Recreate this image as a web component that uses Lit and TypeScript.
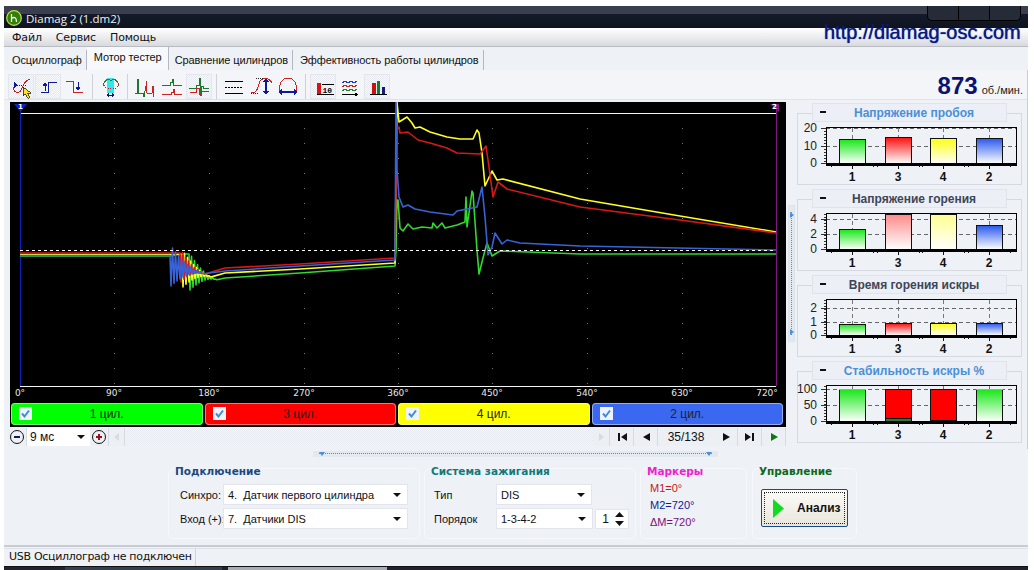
import { LitElement, html, css, svg } from 'lit';
import { customElement, property } from 'lit/decorators.js';

type Pt = [number, number];

const toPoints = (pts: Pt[]) => pts.map((p) => `${p[0]},${p[1]}`).join(' ');

// damped ringing after the ignition pulse, drawn as a step line
function ring(x0: number, x1: number, y: number, amp: number, period: number): Pt[] {
  const out: Pt[] = [];
  for (let x = x0; x <= x1; x += period / 2) {
    const k = (x - x0) / (x1 - x0);
    const sign = Math.round((x - x0) / (period / 2)) % 2 ? -1 : 1;
    out.push([x, y + (k * 8) + sign * amp * Math.pow(1 - k, 2)]);
  }
  return out;
}

const WAVES: { color: string; pts: Pt[] }[] = [
  {
    color: '#30d830',
    pts: [[20, 256], [172, 256], [178, 254], [189, 254], ...ring(190, 218, 272, 18, 3),
      [225, 278], [300, 273], [395, 266], [396, 250], [397, 200], [398, 200], [400, 228], [403, 231], [408, 224], [413, 229], [422, 227], [432, 228], [433, 223], [437, 228], [442, 223], [445, 228], [457, 225], [465, 222], [466, 197], [467, 227], [469, 213], [472, 191], [473, 193], [477, 250], [479, 274], [483, 258], [487, 243], [492, 256], [500, 251], [580, 254], [776, 254]],
  },
  {
    color: '#ffff20',
    pts: [[20, 254.5], [182, 254.5], ...ring(183, 212, 269, 18, 3),
      [225, 273], [300, 269], [395, 263], [397, 102], [399, 122], [407, 117], [412, 123], [415, 128], [420, 127], [430, 132], [447, 137], [460, 139], [473, 139], [477, 130], [479, 133], [482, 153], [485, 186], [492, 171], [497, 180], [503, 179], [580, 199], [680, 216], [776, 232]],
  },
  {
    color: '#d81818',
    pts: [[20, 253], [180, 253], ...ring(181, 205, 266, 16, 3),
      [225, 268], [300, 264], [395, 258], [397, 127], [399, 127], [400, 133], [408, 132], [418, 140], [430, 143], [447, 148], [457, 153], [480, 154], [486, 146], [489, 167], [493, 197], [498, 182], [507, 189], [580, 207], [680, 220], [776, 233]],
  },
  {
    color: '#3a62d8',
    pts: [[20, 255.5], [170, 255.5], ...ring(171, 205, 266, 20, 3),
      [225, 271], [300, 266], [395, 260], [396, 102], [397, 170], [399, 197], [403, 207], [408, 205], [415, 209], [430, 212], [453, 215], [457, 211], [477, 207], [482, 187], [485, 217], [488, 255], [492, 247], [495, 233], [502, 244], [507, 240], [520, 243], [580, 246], [776, 250]],
  },
];

const DEGREES = [
  [20, '0°'], [114, '90°'], [209, '180°'], [304, '270°'], [398, '360°'],
  [492, '450°'], [587, '540°'], [682, '630°'], [767, '720°'],
] as const;

// toolbar pictures, 26x26 with the button's own origin
const ICONS: Record<string, unknown> = {
  cursor: svg`<path d="M6 8v6l3-3z" fill="#0a1a9a"/><path d="M9 11h10" stroke="#0a1a9a" stroke-dasharray="1 1"/>
    <path d="M5 13c1 7 7 7 9 1s5-8 8-9" stroke="#c02020" fill="none"/>
    <path d="M15 13v9l2.500-2 2 4 2-1-2-4H23z" fill="#ffe020" stroke="#222" stroke-width=".8"/>`,
  up: svg`<path d="M6 18.500h7V8h9" stroke="#0a1a9a" fill="none"/><path d="M10 17V11" stroke="#0a1a9a"/><path d="M7.500 12h5L10 8z" fill="#0a1a9a"/>`,
  down: svg`<path d="M4 7.500h7V18h10" stroke="#d02020" fill="none"/><path d="M16 8v6" stroke="#0a1a9a"/><path d="M13.500 13h5L16 17z" fill="#0a1a9a"/>`,
  scan: svg`<rect x="10" y="4" width="7" height="15" fill="#30e8f0"/>
    <path d="M6 12c1-6 5-8 8-5 3-3 7-1 8 5" stroke="#208040" fill="none"/>
    <path d="M6 9c2 6 5 6 8 6s6 0 8-6" stroke="#c02020" stroke-dasharray="1 1.500" fill="none"/>
    <path d="M10 21h7" stroke="#0a1a6a"/><path d="M9 21l3-2v4zM18 21l-3-2v4z" fill="#0a1a6a"/>`,
  pulses: svg`<path d="M3 19h2V5h1v14h5l1 4 2-11" stroke="#1a7a2a" fill="none"/><path d="M14 19V7l1 12h5l1-7 1 11" stroke="#d02020" fill="none"/>`,
  stack: svg`<path d="M3 11.500h8V8h2V5h1v6h2v.5h7" stroke="#1a7a2a" fill="none"/><path d="M3 20.500h9V18h2v-3h1v5h2v.5h6" stroke="#d02020" fill="none"/>`,
  stackOn: svg`<path d="M3 14.500h7V11h3V4h1v17h1v-9h2v2.500h6" stroke="#1a7a2a" fill="none"/><path d="M4 18.500h6V14h3v6h2v-2.500h8" stroke="#d02020" fill="none"/>`,
  lines: svg`<path d="M4 7.500h18M4 19.500h18" stroke="#000"/><path d="M4 13.500h18" stroke="#000" stroke-dasharray="2 1"/>`,
  rise: svg`<path d="M8 4.500h10M3 19.500h8" stroke="#222" stroke-dasharray="1 1"/><path d="M3 19c5 0 6-2 8-9 1-6 9-8 13-1" stroke="#d02020" fill="none"/>
    <path d="M18 7v11" stroke="#0a1a9a" stroke-width="1.500"/><path d="M15 8h6l-3-4zM15 17h6l-3 4z" fill="#0a1a9a"/>`,
  dome: svg`<path d="M5 18C3 9 8 4 13 4s10 5 8 14" stroke="#d02020" fill="none"/>
    <path d="M6 18h14" stroke="#0a1a9a" stroke-width="1.500"/><path d="M7 15v6l-4-3zM19 15v6l4-3z" fill="#0a1a9a"/>`,
  bar10: svg`<rect x="7" y="9" width="4" height="11" fill="#e01010"/><path d="M7 20.500h17" stroke="#000"/><path d="M12 10.500h12" stroke="#000"/>
    <text x="12.500" y="19" font-size="8" font-weight="700" font-family="'Liberation Mono', monospace" fill="#000">10</text>`,
  waves: svg`<path d="M5 9l3-2 3 2 3-2 3 2 3-2" stroke="#1a3ad0" fill="none"/><path d="M5 13l3-2 3 2 3-2 3 2 3-2" stroke="#d02020" fill="none"/><path d="M5 17l3-2 3 2 3-2 3 2 3-2" stroke="#1a8a2a" fill="none"/>
    <path d="M5 20.500h14" stroke="#000"/><path d="M18 18.500l3 2-3 2z" fill="#000"/>`,
  bars: svg`<rect x="8" y="9" width="4" height="11" fill="#d01010"/><rect x="13" y="7" width="3" height="13" fill="#108020"/><rect x="18" y="13" width="3" height="7" fill="#101a80"/><path d="M6 20.500h17" stroke="#000"/>`,
};

@customElement('tool-button')
export class ToolButton extends LitElement {
  static styles = css`
    :host { display: block; width: 26px; height: 25px; box-sizing: border-box; border: 1px solid transparent; }
    :host([on]) {
      border-color: #e3e6ea;
      background: repeating-conic-gradient(#f8f9fb 0 25%, #e6e9ef 0 50%) 0 0 / 2px 2px;
    }
    svg { display: block; margin: -1px; }
  `;

  @property() icon = '';
  @property({ type: Boolean, reflect: true }) on = false;

  render() {
    return html`<svg width="26" height="26" viewBox="0 0 26 26" shape-rendering="crispEdges">${ICONS[this.icon]}</svg>`;
  }
}

@customElement('scope-view')
export class ScopeView extends LitElement {
  static styles = css`
    :host { display: block; width: 776px; height: 298px; background: #000; }
    svg { display: block; }
    text { font: 9px "DejaVu Sans", sans-serif; fill: #e8e8e8; }
    .mark { font: bold 7px "DejaVu Sans", sans-serif; fill: #fff; }
  `;

  render() {
    return html`<svg width="776" height="298" viewBox="10 102 776 298">
      ${[114, 209, 304, 398, 492, 587, 682].map((x) => svg`
        <path d="M${x}.5 113V386" stroke="#777" stroke-dasharray="1 14"/>`)}
      <path d="M20 113.500H776M20 386.500H776" stroke="#f4f4f4"/>
      <path d="M20.500 110V386" stroke="#1020c0"/>
      <path d="M776.500 110V386" stroke="#801a80"/>
      ${WAVES.map((w) => svg`
        <polyline points=${toPoints(w.pts)} fill="none" stroke=${w.color} stroke-width="1.600" stroke-linejoin="round"/>`)}
      <path d="M20 250.500H776" stroke="#fff" stroke-dasharray="3 3"/>
      <path d="M14 104h13l-6.500 8z" fill="#1020c0"/>
      <text class="mark" x="18" y="109">1</text>
      <path d="M770 104h9v8z" fill="#801a80"/>
      <text class="mark" x="772" y="109">2</text>
      ${DEGREES.map(([x, t]) => svg`<text x=${x} y="396" text-anchor="middle">${t}</text>`)}
    </svg>`;
  }
}

type Bar = { top: number; fill: string; cap?: number; rim?: boolean };

@customElement('bar-chart')
export class BarChart extends LitElement {
  static styles = css`
    :host { display: block; position: relative; box-sizing: border-box; height: 72px; margin: 10px 0 14px; border: 1px solid #d5dae2; }
    .head {
      position: absolute; left: 14px; top: -11px; width: 195px; height: 19px; box-sizing: border-box; padding-left: 9px;
      display: flex; align-items: center; justify-content: center;
      background: #eceff5; border: 1px solid #dfe3ea;
      font: bold 12px "Liberation Sans", Arial, sans-serif;
    }
    .dash { position: absolute; left: 7px; top: 7px; width: 6px; height: 2px; background: #111; }
    svg { display: block; position: absolute; left: -1px; top: 0; }
    text { font: 12px "Liberation Sans", sans-serif; fill: #222; }
    .cat { font-weight: 700; fill: #111; }
  `;

  @property() heading = '';
  @property() tone = '#4a90d8';
  @property({ attribute: false }) ticks: { label: string; y: number }[] = [];
  @property({ attribute: false }) bars: Bar[] = [];

  render() {
    const xs = [42, 88, 133, 179];
    return html`
      <svg width="225" height="72" viewBox="0 0 225 72" shape-rendering="crispEdges">
        <defs>
          ${['#18e818', '#ff1010', '#ffff10', '#2a58ee'].map((c, i) => svg`
            <linearGradient id="g${i}" x1="0" y1="0" x2="0" y2="1"><stop offset="0" stop-color=${c}/><stop offset="1" stop-color="#fff"/></linearGradient>`)}
          <linearGradient id="g4" x1="0" y1="0" x2="0" y2="1"><stop offset="0" stop-color="#ff8a8a"/><stop offset="1" stop-color="#fff"/></linearGradient>
          <linearGradient id="g5" x1="0" y1="0" x2="0" y2="1"><stop offset="0" stop-color="#ffff90"/><stop offset="1" stop-color="#fff"/></linearGradient>
        </defs>
        <path d="M28 14V50" stroke="#333" stroke-width="2" stroke-dasharray="1 2"/>
        ${this.ticks.map((t) => svg`
          <path d="M29 ${t.y}.5H219" stroke="#666" stroke-dasharray="4 3"/>
          <path d="M24 ${t.y}.5h5" stroke="#333"/>
          <text x="20" y=${t.y + 4} text-anchor="end">${t.label}</text>`)}
        ${xs.map((x) => svg`<path d="M${x + 13}.5 14V50" stroke="#777" stroke-dasharray="4 3"/>`)}
        ${this.bars.map((b, i) => svg`
          <rect x=${xs[i]}.5 y=${b.top}.5 width="26" height=${49 - b.top} fill=${b.fill} stroke="#111"/>
          ${b.rim ? svg`<path d="M${xs[i]} ${b.top}.5h27" stroke="#ff8080"/>` : null}
          ${b.cap ? svg`<rect x=${xs[i]}.5 y=${49 - b.cap}.5 width="26" height=${b.cap} fill="#2a7a3a" stroke="#111"/>` : null}`)}
        <rect x="29.500" y="13.500" width="190" height="36" fill="none" stroke="#000" stroke-width="1"/>
        <path d="M29 50.500H220" stroke="#000" stroke-width="2"/>
        ${xs.map((x, i) => svg`
          <path d="M${x - 8}.5 51v2M${x + 13}.5 51v4M${x + 34}.5 51v2" stroke="#111"/>
          <text class="cat" x=${x + 13} y="67" text-anchor="middle">${['1', '3', '4', '2'][i]}</text>`)}
      </svg>
      <div class="head" style="color:${this.tone}"><span class="dash"></span>${this.heading}</div>
    `;
  }
}

@customElement('combo-box')
export class ComboBox extends LitElement {
  static styles = css`
    :host { display: flex; align-items: center; box-sizing: border-box; height: 21px; padding: 0 6px 0 4px; background: #fff; border: 1px solid #e2e6ec; font: 11px "Liberation Sans", Arial, sans-serif; color: #111; }
    span { flex: 1; white-space: pre; }
    i { width: 0; height: 0; border: 4px solid transparent; border-top: 4px solid #111; border-bottom: 0; }
  `;

  @property() value = '';

  render() {
    return html`<span>${this.value}</span><i></i>`;
  }
}

@customElement('app-root')
export class AppRoot extends LitElement {
  static styles = css`
    :host { display: block; width: 1034px; height: 570px; overflow: hidden; background: #fff; position: relative; font-family: "Liberation Sans", Arial, sans-serif; }
    .win { display: flex; flex-direction: column; width: 1024px; height: 564px; margin: 6px 0 0 4px; background: #eef1f6; }

    .title { height: 22px; flex: none; display: flex; align-items: center; padding: 2px 0 0 2px; box-sizing: border-box; gap: 4px; color: #f0f0f0; font: 11.500px "Open Sans", sans-serif; background: linear-gradient(#3a3f4d 0 8px, #141a2a 8px, #10141f); }
    .title .caps { align-self: flex-start; margin: -2px 7px 0 auto; width: 94px; height: 15px; display: flex; box-sizing: border-box; border: 1px solid #000; border-top: 0; border-radius: 0 0 5px 5px; background: #262b38; }
    .caps b { flex: 1; border-right: 1px solid #000; }
    .caps b:last-child { border: 0; }
    .url { position: absolute; left: 824px; top: 21px; color: #0b1a80; font-size: 20px; white-space: nowrap; text-shadow: 0 0 1px #0b1a80; }

    .menu { height: 19px; flex: none; display: flex; gap: 14px; align-items: center; padding-left: 8px; font: 11px "DejaVu Sans", sans-serif; letter-spacing: -.15px; color: #111; background: linear-gradient(#fff, #d8dade); border-bottom: 1px solid #b8bcc2; box-sizing: border-box; }

    .tabs { height: 23px; flex: none; display: flex; align-items: flex-end; font-size: 11px; letter-spacing: -.1px; color: #111; }
    .tab { height: 20px; padding: 0 4px 0 6px; display: flex; align-items: center; border-right: 1px solid #b4b8c0; white-space: nowrap; }
    .tab:first-child { padding-left: 8px; }
    .tab.on { height: 23px; align-items: flex-start; padding: 4px 6px 0 7px; background: #f7f8fb; box-sizing: border-box; }
    .tab:last-child { padding-left: 7px; }

    .toolbar { height: 30px; flex: none; display: flex; align-items: flex-start; padding: 4px 0 0 4px; gap: 1px; box-sizing: border-box; border-bottom: 1px solid #e0e3e9; border-right: 1px solid #c8ccd3; background: #f3f5f9; position: relative; }
    .sep { width: 1px; height: 25px; background: #cdd1d8; margin: 0 3px; }
    .rpm { margin-left: auto; margin-right: 4px; display: flex; align-items: baseline; gap: 4px; color: #0a1470; font-weight: 700; font-size: 24px; margin-top: -2px; }
    .rpm small { font-weight: 400; font-size: 11px; color: #222; }

    .main { display: flex; height: 349px; flex: none; border-right: 1px solid #c8ccd3; }
    .left { width: 784px; flex: none; padding: 2px 0 0 6px; box-sizing: border-box; }

    .channels { display: flex; gap: 2px; height: 27px; width: 776px; box-sizing: border-box; padding: 3px 3px 2px 1px; background: #000; }
    .chan { flex: 1; display: flex; align-items: center; justify-content: center; position: relative; border-radius: 4px; font-size: 12px; color: #222; box-shadow: inset 0 0 0 1px rgba(255, 255, 255, .45); }
    .box { position: absolute; left: 8px; top: 4px; width: 13px; height: 13px; background: #eef4ff; }
    .box svg { display: block; }

    .ctrl { display: flex; height: 18px; margin: 1px 0 0 -2px; width: 778px; background: repeating-conic-gradient(#f4f6f9 0 25%, #e7eaf0 0 50%) 0 0 / 2px 2px; }
    .btn { width: 24px; height: 18px; flex: none; display: flex; align-items: center; justify-content: center; box-sizing: border-box; background: #eceff4; border-right: 1px solid #d6dae1; }
    .btn svg { display: block; }
    .zoom { width: 63px; height: 18px; flex: none; }
    .zoom.combo { height: 18px; border: 0; padding: 0 5px 0 3px; font-size: 12px; }
    .count { width: 56px; text-align: center; font-size: 12px; line-height: 18px; background: #eceff4; color: #111; }
    .fill { flex: 1; }

    .tri { position: absolute; width: 0; height: 0; }
    .vsplit { width: 7px; height: 137px; flex: none; margin-top: 105px; background: #e4e8ef; position: relative; border: 1px solid #dde1e8; box-sizing: border-box; }
    .vsplit::before { content: ""; position: absolute; left: 2px; top: 6px; bottom: 6px; border-left: 1px dotted #4a90d8; }
    .vsplit .tri { left: 1px; border-left: 4px solid #4a90d8; border-top: 3px solid transparent; border-bottom: 3px solid transparent; }

    .right { flex: 1; padding: 3px 5px 0 2px; box-sizing: border-box; }

    .hsplit { align-self: flex-start; width: 405px; height: 6px; margin: 2px 0 0 309px; box-sizing: border-box; background: #e4e8ef; position: relative; flex: none; }
    .hsplit::before { content: ""; position: absolute; left: 6px; right: 6px; top: 2px; border-top: 1px dotted #4a90d8; }
    .hsplit .tri { top: 1px; border-top: 4px solid #4a90d8; border-left: 3px solid transparent; border-right: 3px solid transparent; }

    .lower { display: flex; gap: 4px; height: 88px; flex: none; padding: 8px 0 0 164px; align-items: flex-start; box-sizing: border-box; }
    fieldset { margin: 0; padding: 0 6px; border: 1px solid #f6f8fb; border-radius: 6px; box-sizing: border-box; height: 74px; min-width: 0; }
    legend { padding: 0; height: 6px; font: bold 10.500px/12px "DejaVu Sans", sans-serif; white-space: nowrap; }
    .row { display: flex; align-items: center; height: 21px; margin-bottom: 3px; font-size: 11px; color: #111; }
    .row.first { margin-top: 13px; }
    .row label { flex: none; white-space: nowrap; }
    .mk { font-size: 11px; line-height: 17px; padding-left: 3px; }
    .spin { width: 34px; height: 20px; box-sizing: border-box; margin-left: 2px; background: #fff; border: 1px solid #e2e6ec; display: flex; align-items: center; justify-content: space-between; padding: 0 4px 0 6px; font-size: 12px; }
    .run { margin: 18px 0 0 2px; width: 87px; height: 38px; box-sizing: border-box; border: 1px solid #164a8a; border-radius: 2px; padding: 2px; background: linear-gradient(#fcfcf8, #e8e6dc); display: flex; align-items: center; }
    .run div { flex: 1; height: 100%; display: flex; align-items: center; gap: 13px; padding-left: 8px; border: 1px dotted #222; box-sizing: border-box; font-weight: 700; font-size: 12px; color: #111; }

    .status { flex: none; height: 21px; box-sizing: border-box; border-top: 2px solid #c9cdd3; padding-top: 1px; display: flex; font: 11px "DejaVu Sans", sans-serif; letter-spacing: -.3px; color: #111; }
    .status span { padding: 1px 3px 0 5px; height: 18px; box-sizing: border-box; border-right: 1px solid #cfd3da; border-top: 1px solid #dfe3e9; }
    .status i { flex: 1; border-top: 1px solid #dfe3e9; }

    .task { flex: none; width: 1024px; margin: -4px 0 0 4px; height: 4px; display: flex; background: #20232e; border-top: 1px solid #111; box-sizing: border-box; }
    .task .a { margin-left: 61px; width: 157px; background: #33404e; }
    .task .b { margin-left: 6px; width: 159px; background: #a8adb4; }
  `;

  private panel(heading: string, tone: string, ticks: { label: string; y: number }[], bars: Bar[]) {
    return html`<bar-chart .heading=${heading} .tone=${tone} .ticks=${ticks} .bars=${bars}></bar-chart>`;
  }

  private arrow(d: string, fill = '#111') {
    return html`<svg width="12" height="12" viewBox="0 0 12 12"><path d=${d} fill=${fill}/></svg>`;
  }

  private circle(sign: string, tone: string) {
    return html`<svg width="16" height="16" viewBox="0 0 16 16"><circle cx="8" cy="8" r="6.500" fill="#eef0f4" stroke="#111"/><path d=${sign} stroke=${tone} stroke-width="2"/></svg>`;
  }

  render() {
    const check = html`<svg width="13" height="13" viewBox="0 0 13 13"><path d="M3 6.500l2.500 3L10 3.500" fill="none" stroke="#3f8ae0" stroke-width="2"/></svg>`;
    return html`
      <div class="win">
        <div class="title">
          <svg width="16" height="16" viewBox="0 0 16 16"><circle cx="8" cy="8" r="7.300" fill="#2f7f10" stroke="#c8e040" stroke-width="1.200"/><path d="M5.500 4v8M5.500 8.500c3-2 5-1 5 3.500" stroke="#f4f4e0" stroke-width="1.300" fill="none"/></svg>
          <span>Diamag 2 (1.dm2)</span>
          <div class="caps"><b></b><b></b><b></b></div>
        </div>
        <div class="menu"><span>Файл</span><span>Сервис</span><span>Помощь</span></div>
        <div class="tabs">
          <div class="tab">Осциллограф</div>
          <div class="tab on">Мотор тестер</div>
          <div class="tab">Сравнение цилиндров</div>
          <div class="tab">Эффективность работы цилиндров</div>
        </div>
        <div class="toolbar">
          <tool-button icon="cursor" on></tool-button>
          <tool-button icon="up" on></tool-button>
          <tool-button icon="down"></tool-button>
          <div class="sep"></div>
          <tool-button icon="scan"></tool-button>
          <div class="sep"></div>
          <tool-button icon="pulses"></tool-button>
          <tool-button icon="stack"></tool-button>
          <tool-button icon="stackOn" on></tool-button>
          <div class="sep"></div>
          <tool-button icon="lines"></tool-button>
          <tool-button icon="rise"></tool-button>
          <tool-button icon="dome"></tool-button>
          <div class="sep"></div>
          <tool-button icon="bar10" on></tool-button>
          <tool-button icon="waves"></tool-button>
          <tool-button icon="bars" on></tool-button>
          <div class="rpm">873<small>об./мин.</small></div>
        </div>
        <div class="main">
          <div class="left">
            <scope-view></scope-view>
            <div class="channels">
              <div class="chan" style="background:#00ff00"><span class="box">${check}</span>1 цил.</div>
              <div class="chan" style="background:#ff0000"><span class="box">${check}</span>3 цил.</div>
              <div class="chan" style="background:#ffff00"><span class="box">${check}</span>4 цил.</div>
              <div class="chan" style="background:#3a68f0"><span class="box">${check}</span>2 цил.</div>
            </div>
            <div class="ctrl">
              <div class="btn" style="width:19px">${this.circle('M5 8h6', '#101a6a')}</div>
              <combo-box class="zoom combo" value="9 мс"></combo-box>
              <div class="btn" style="width:19px">${this.circle('M5 8h6M8 5v6', '#9a1020')}</div>
              <div class="btn" style="width:16px">${this.arrow('M8 2v8L3 6z', '#d8dbe0')}</div>
              <div class="fill"></div>
              <div class="btn" style="width:17px">${this.arrow('M4 2v8l5-4z', '#d8dbe0')}</div>
              <div class="btn">${this.arrow('M2 2h2v8H2zM11 2v8L5 6z')}</div>
              <div class="btn">${this.arrow('M10 2v8L3 6z')}</div>
              <div class="count">35/138</div>
              <div class="btn">${this.arrow('M3 2v8l7-4z')}</div>
              <div class="btn">${this.arrow('M1 2v8l6-4zM8 2h2v8H8z')}</div>
              <div class="btn">${this.arrow('M3 2v8l7-4z', '#0a7a10')}</div>
            </div>
          </div>
          <div class="vsplit"><i class="tri" style="top:6px"></i><i class="tri" style="bottom:6px"></i></div>
          <div class="right">
            ${this.panel('Напряжение пробоя', '#4a90d8', [{ label: '20', y: 14 }, { label: '10', y: 32 }, { label: '0', y: 49 }], [
              { top: 25, fill: 'url(#g0)' }, { top: 23, fill: 'url(#g1)' }, { top: 24, fill: 'url(#g2)' }, { top: 24, fill: 'url(#g3)' }])}
            ${this.panel('Напряжение горения', '#3c4658', [{ label: '4', y: 19 }, { label: '2', y: 34 }, { label: '0', y: 49 }], [
              { top: 29, fill: 'url(#g0)' }, { top: 14, fill: 'url(#g4)' }, { top: 14, fill: 'url(#g5)' }, { top: 25, fill: 'url(#g3)' }])}
            ${this.panel('Время горения искры', '#3c4658', [{ label: '2', y: 22 }, { label: '1', y: 36 }, { label: '0', y: 49 }], [
              { top: 38, fill: 'url(#g0)' }, { top: 37, fill: 'url(#g1)' }, { top: 37, fill: 'url(#g2)' }, { top: 37, fill: 'url(#g3)' }])}
            ${this.panel('Стабильность искры %', '#4a90d8', [{ label: '100', y: 17 }, { label: '50', y: 33 }, { label: '0', y: 49 }], [
              { top: 17, fill: 'url(#g0)', rim: true }, { top: 17, fill: '#ff0000', cap: 3 }, { top: 17, fill: '#ff0000', cap: 1 }, { top: 17, fill: 'url(#g0)', rim: true }])}
          </div>
        </div>
        <div class="hsplit"><i class="tri" style="left:6px"></i><i class="tri" style="right:6px"></i></div>
        <div class="lower">
          <fieldset style="width:252px">
            <legend style="color:#1a4a80">Подключение</legend>
            <div class="row first"><label style="width:43px;margin-left:5px">Синхро:</label><combo-box style="width:185px" value="4.  Датчик первого цилиндра"></combo-box></div>
            <div class="row"><label style="width:43px;margin-left:5px">Вход (+):</label><combo-box style="width:185px" value="7.  Датчики DIS"></combo-box></div>
          </fieldset>
          <fieldset style="width:212px">
            <legend style="color:#0f7a7a">Система зажигания</legend>
            <div class="row first"><label style="width:62px;margin-left:3px">Тип</label><combo-box style="width:96px" value="DIS"></combo-box></div>
            <div class="row"><label style="width:62px;margin-left:3px">Порядок</label><combo-box style="width:98px" value="1-3-4-2"></combo-box>
              <div class="spin"><span>1</span><svg width="9" height="14" viewBox="0 0 9 14"><path d="M0 5l4.500-5L9 5zM0 9l4.500 5L9 9z" fill="#111"/></svg></div>
            </div>
          </fieldset>
          <fieldset style="width:107px">
            <legend style="color:#f020d0">Маркеры</legend>
            <div class="mk" style="color:#c81818;margin-top:9px">M1=0°</div>
            <div class="mk" style="color:#101a9a">M2=720°</div>
            <div class="mk" style="color:#7a107a">ΔM=720°</div>
          </fieldset>
          <fieldset style="width:105px;margin-left:1px">
            <legend style="color:#0a6a20">Управление</legend>
            <div class="run"><div><svg width="11" height="19" viewBox="0 0 11 19"><path d="M0 0l11 9.500L0 19z" fill="#12dc20"/></svg>Анализ</div></div>
          </fieldset>
        </div>
        <div class="status"><span>USB Осциллограф не подключен</span><i></i></div>
      </div>
      <div class="task"><div class="a"></div><div class="b"></div></div>
      <div class="url">http://diamag-osc.com</div>
    `;
  }
}
